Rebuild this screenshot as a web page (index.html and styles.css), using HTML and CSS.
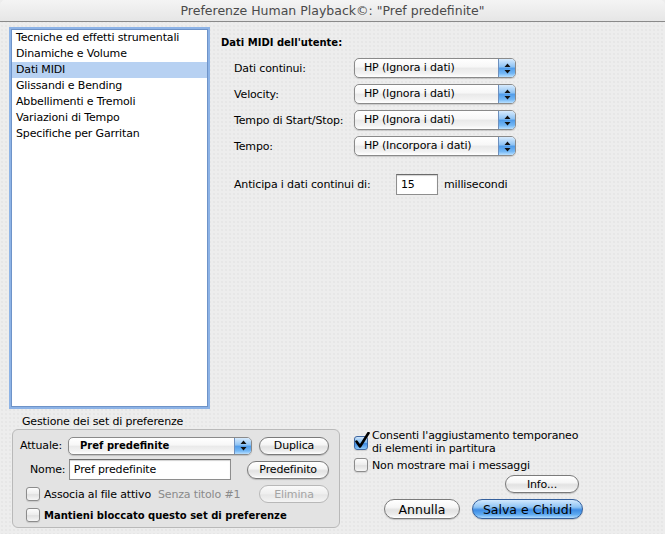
FILE: index.html
```html
<!DOCTYPE html>
<html lang="it">
<head>
<meta charset="utf-8">
<title>Preferenze Human Playback</title>
<link rel="stylesheet" href="styles.css">
</head>
<body>
<div class="window">
  <div class="titlebar">Preferenze Human Playback©: "Pref predefinite"</div>
  <div class="top">
    <ul class="list">
      <li>Tecniche ed effetti strumentali</li>
      <li>Dinamiche e Volume</li>
      <li class="selected">Dati MIDI</li>
      <li>Glissandi e Bending</li>
      <li>Abbellimenti e Tremoli</li>
      <li>Variazioni di Tempo</li>
      <li>Specifiche per Garritan</li>
    </ul>
    <div class="panel">
      <div class="heading">Dati MIDI dell'utente:</div>
      <div class="rows">
        <div class="row">
          <span class="label">Dati continui:</span>
          <div class="popup"><span class="popup-text">HP (Ignora i dati)</span><span class="arrows"><svg width="7" height="11" viewBox="0 0 7 11"><path d="M3.5 0.5 L6.5 4 L0.5 4 Z M3.5 10.5 L6.5 7 L0.5 7 Z" fill="#111"/></svg></span></div>
        </div>
        <div class="row">
          <span class="label">Velocity:</span>
          <div class="popup"><span class="popup-text">HP (Ignora i dati)</span><span class="arrows"><svg width="7" height="11" viewBox="0 0 7 11"><path d="M3.5 0.5 L6.5 4 L0.5 4 Z M3.5 10.5 L6.5 7 L0.5 7 Z" fill="#111"/></svg></span></div>
        </div>
        <div class="row">
          <span class="label">Tempo di Start/Stop:</span>
          <div class="popup"><span class="popup-text">HP (Ignora i dati)</span><span class="arrows"><svg width="7" height="11" viewBox="0 0 7 11"><path d="M3.5 0.5 L6.5 4 L0.5 4 Z M3.5 10.5 L6.5 7 L0.5 7 Z" fill="#111"/></svg></span></div>
        </div>
        <div class="row">
          <span class="label">Tempo:</span>
          <div class="popup"><span class="popup-text">HP (Incorpora i dati)</span><span class="arrows"><svg width="7" height="11" viewBox="0 0 7 11"><path d="M3.5 0.5 L6.5 4 L0.5 4 Z M3.5 10.5 L6.5 7 L0.5 7 Z" fill="#111"/></svg></span></div>
        </div>
      </div>
      <div class="anticipa">
        <span class="label-wide">Anticipa i dati continui di:</span>
        <div class="field small">15</div>
        <span class="unit">millisecondi</span>
      </div>
    </div>
  </div>
  <div class="bottom">
    <div class="group-wrap">
      <div class="group-label">Gestione dei set di preferenze</div>
      <div class="group">
        <div class="g-row r1">
          <span class="g-label">Attuale:</span>
          <div class="popup popup-small"><span class="popup-text bold">Pref predefinite</span><span class="arrows"><svg width="7" height="11" viewBox="0 0 7 11"><path d="M3.5 0.5 L6.5 4 L0.5 4 Z M3.5 10.5 L6.5 7 L0.5 7 Z" fill="#111"/></svg></span></div>
          <div class="btn btn-small btn-duplica">Duplica</div>
        </div>
        <div class="g-row r2">
          <span class="g-label g-label-nome">Nome:</span>
          <div class="field name">Pref predefinite</div>
          <div class="btn btn-small btn-predef">Predefinito</div>
        </div>
        <div class="g-row r3">
          <span class="check"></span>
          <span class="check-text">Associa al file attivo</span>
          <span class="muted">Senza titolo #1</span>
          <div class="btn btn-small btn-disabled">Elimina</div>
        </div>
        <div class="g-row r4">
          <span class="check"></span>
          <span class="check-text bold">Mantieni bloccato questo set di preferenze</span>
        </div>
      </div>
    </div>
    <div class="options">
      <div class="opt opt1">
        <span class="check checked"><svg class="tick" width="16" height="17" viewBox="0 0 16 17"><path d="M2.5 9.5 L6 14.5 L14.5 1" fill="none" stroke="#000" stroke-width="2.6" stroke-linecap="round" stroke-linejoin="round"/></svg></span>
        <span class="opt-text">Consenti l'aggiustamento temporaneo<br>di elementi in partitura</span>
      </div>
      <div class="opt opt2">
        <span class="check"></span>
        <span class="opt-text">Non mostrare mai i messaggi</span>
      </div>
      <div class="info-row"><div class="btn btn-small btn-info">Info...</div></div>
      <div class="actions">
        <div class="btn btn-large btn-annulla">Annulla</div>
        <div class="btn btn-large btn-default">Salva e Chiudi</div>
      </div>
    </div>
  </div>
</div>
</body>
</html>
```

FILE: styles.css
```css
* { box-sizing: border-box; }
html, body {
  margin: 0;
  padding: 0;
}
body {
  width: 665px;
  height: 534px;
  overflow: hidden;
  background: #ececec;
  font-family: "DejaVu Sans", "Liberation Sans", sans-serif;
  font-size: 11px;
  letter-spacing: -0.15px;
  color: #000;
}
.window {
  width: 665px;
  height: 534px;
  background-color: #ededed;
  background-image: radial-gradient(circle, #e2e2e2 0.6px, transparent 0.9px);
  background-size: 4px 4px;
}
.titlebar {
  height: 22px;
  line-height: 21px;
  text-align: center;
  font-size: 12.5px;
  letter-spacing: 0;
  color: #4a4a4a;
  border-bottom: 1px solid #8a8a8a;
  background: linear-gradient(#f4f4f4, #e6e6e6);
  border-radius: 5px 5px 0 0;
}
.top {
  display: flex;
  height: 387px;
  padding: 5px 0 0 9px;
}
.list {
  list-style: none;
  margin: 0;
  width: 201px;
  height: 382px;
  background: #fff;
  border: 2px solid #8db3e6;
  box-shadow: inset 0 0 0 1px #6e93c8;
  padding: 1px 1px 0;
}
.list li {
  height: 16px;
  line-height: 16px;
  padding-left: 4px;
  white-space: nowrap;
}
.list li.selected {
  background: #b7d1f2;
}
.panel {
  margin-left: 11px;
  padding-top: 9px;
}
.heading {
  font-weight: bold;
  font-size: 10px;
  letter-spacing: 0;
  line-height: 14px;
  height: 14px;
}
.rows {
  margin-top: 8px;
  margin-left: 13px;
  display: flex;
  flex-direction: column;
  gap: 6px;
}
.row {
  display: flex;
  align-items: center;
  height: 20px;
}
.label {
  width: 120px;
}
.popup {
  display: flex;
  align-items: stretch;
  width: 162px;
  height: 20px;
  border: 1px solid #8a8a8a;
  border-radius: 5px;
  overflow: hidden;
  background: linear-gradient(#ffffff 0%, #f7f7f7 45%, #e9e9e9 50%, #f2f2f2 80%, #ffffff 100%);
  box-shadow: 0 1px 1px rgba(0,0,0,0.15);
}
.popup-text {
  flex: 1;
  padding-left: 9px;
  line-height: 18px;
  white-space: nowrap;
}
.popup-text.bold { padding-left: 11px; }
.arrows {
  width: 17px;
  display: flex;
  align-items: center;
  justify-content: center;
  border-left: 1px solid #6d8fbd;
  background: linear-gradient(#d8ebfd 0%, #8cc2f4 45%, #4f9be9 50%, #73b7f5 80%, #b9e0ff 100%);
}
.anticipa {
  display: flex;
  align-items: center;
  margin-top: 18px;
  margin-left: 13px;
  height: 21px;
}
.label-wide { width: 162px; }
.field {
  background: #fff;
  border: 1px solid #8e8e8e;
  border-top-color: #6a6a6a;
  box-shadow: inset 0 1px 1px rgba(0,0,0,0.18);
  line-height: 19px;
  padding-left: 4px;
}
.field.small { width: 42px; height: 21px; }
.unit { margin-left: 6px; }

.bottom {
  display: flex;
}
.group-wrap {
  padding-left: 12px;
  width: 340px;
}
.group-label {
  margin-top: 6px;
  padding-left: 10px;
  line-height: 14px;
  height: 14px;
}
.group {
  width: 328px;
  height: 99px;
  border: 1px solid #b9b9b9;
  border-radius: 6px;
  background: #e3e3e3;
  padding: 6px 10px 0 7px;
}
.g-row {
  display: flex;
  align-items: center;
}
.r1 { height: 19px; }
.r2 { height: 21px; margin-top: 4px; }
.r3 { height: 16px; margin-top: 6px; }
.r4 { height: 14px; margin-top: 6px; }
.g-label { width: 48px; }
.g-label-nome { width: 49px; padding-left: 10px; }
.popup-small { width: 184px; height: 18px; }
.popup-small .popup-text { line-height: 16px; }
.field.name { width: 163px; height: 21px; }
.btn {
  display: flex;
  align-items: center;
  justify-content: center;
  border: 1px solid #7a7a7a;
  border-radius: 10px;
  background: linear-gradient(#ffffff 0%, #f6f6f6 40%, #e2e2e2 55%, #ececec 80%, #ffffff 100%);
  box-shadow: 0 1px 1px rgba(0,0,0,0.18);
  white-space: nowrap;
}
.btn-small { height: 18px; font-size: 11px; }
.btn-duplica { width: 70px; margin-left: 7px; }
.btn-predef { width: 82px; margin-left: 16px; }
.btn-disabled {
  width: 70px;
  margin-left: auto;
  color: #a4a4a4;
  border-color: #b8b8b8;
  background: linear-gradient(#fafafa, #eeeeee 50%, #e6e6e6 55%, #f4f4f4);
  box-shadow: none;
}
.check {
  position: relative;
  display: inline-block;
  width: 14px;
  height: 14px;
  flex: none;
  border: 1px solid #8c8c8c;
  border-radius: 3px;
  background: linear-gradient(#fdfdfd, #ececec 50%, #e0e0e0 55%, #f6f6f6);
  box-shadow: 0 1px 1px rgba(0,0,0,0.12);
}
.g-row .check { margin-left: 6px; }
.check-text { margin-left: 4px; }
.bold { font-weight: bold; font-size: 10px; letter-spacing: 0; }
.muted { color: #8a8a8a; margin-left: 7px; }
.check.checked {
  border-color: #3f67a0;
  background: linear-gradient(#cfe5fb, #7fbaf0 45%, #3d8ae3 55%, #8cc9fb);
}
.tick {
  position: absolute;
  left: -1px;
  top: -5px;
}

.options {
  margin-left: 14px;
  padding-top: 20px;
  width: 240px;
}
.opt {
  display: flex;
  align-items: flex-start;
}
.opt-text {
  margin-left: 4px;
  line-height: 13px;
}
.opt1 .check { margin-top: 7px; }
.opt2 { margin-top: 3px; align-items: center; height: 14px; }
.info-row {
  margin-top: 3px;
  padding-left: 151px;
}
.btn-info { width: 74px; }
.actions {
  display: flex;
  margin-top: 6px;
  padding-left: 30px;
}
.btn-large {
  height: 20px;
  font-size: 12.5px;
  letter-spacing: 0;
}
.btn-annulla { width: 76px; }
.btn-default {
  width: 111px;
  margin-left: 12px;
  border-color: #35609c;
  background: linear-gradient(#d2e8fd 0%, #8fc4f5 40%, #3e8ce4 55%, #5da9f0 80%, #b0dcff 100%);
}
```
